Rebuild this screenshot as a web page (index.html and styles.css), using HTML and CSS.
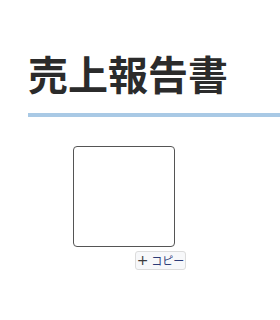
FILE: index.html
```html
<!DOCTYPE html>
<html lang="ja">
<head>
<meta charset="utf-8">
<link rel="stylesheet" href="styles.css">
</head>
<body>
<div class="page">
  <h1 class="title">売上報告書</h1>
  <div class="figure">
    <div class="box"></div>
    <button class="copy"><span class="plus">+</span><span class="label">コピー</span></button>
  </div>
</div>
</body>
</html>
```
FILE: styles.css
```css
html, body {
  margin: 0;
  padding: 0;
  background: #ffffff;
}
.page {
  padding: 46px 0 0 28px;
  font-family: "Noto Sans CJK JP", "Noto Sans", sans-serif;
}
.title {
  margin: 0;
  font-size: 40px;
  font-weight: 700;
  line-height: 54px;
  color: #2b2b2b;
  padding-bottom: 13px;
  border-bottom: 4px solid #a9c9e5;
  letter-spacing: 0;
}
.figure {
  display: inline-flex;
  flex-direction: column;
  margin: 29px 0 0 45px;
  width: 113px;
}
.box {
  align-self: flex-start;
  width: 100px;
  height: 99px;
  border: 1px solid #555555;
  border-radius: 4px;
}
.copy {
  align-self: flex-end;
  margin-top: 4px;
  height: 19px;
  width: 51px;
  padding: 0;
  border: 1px solid #dcdcdc;
  border-radius: 3px;
  background: #f7f8fa;
  font-family: "Noto Sans CJK JP", sans-serif;
  font-size: 11px;
  line-height: 17px;
  color: #333333;
  display: flex;
  align-items: center;
  justify-content: center;
  gap: 3px;
}
.plus {
  font-family: "DejaVu Sans", sans-serif;
  font-size: 14px;
  color: #3a3a3a;
}
.label {
  color: #2c3c78;
}
```
